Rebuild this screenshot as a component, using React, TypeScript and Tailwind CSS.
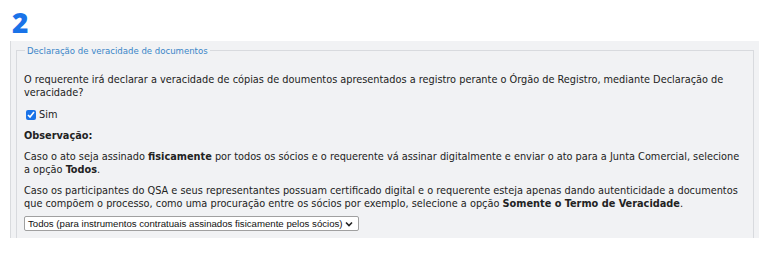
import React from "react";

export default function App() {
  const font = { fontFamily: '"DejaVu Sans Condensed", "DejaVu Sans", sans-serif' };
  return (
    <div className="w-[768px] h-[266px] bg-white relative overflow-hidden">
      <div className="h-[41px] pl-[12px] pt-[7px]">
        <span className="text-[28px] leading-[30px] font-black text-[#1a73e8]" style={{ fontFamily: '"Open Sans", sans-serif' }}>2</span>
      </div>
      <div className="ml-[10px] w-[749px] h-[197px] bg-[#f1f2f4] border-l border-[#d9dbde] pl-[5px] pr-[5px] pt-[3px]">
        <fieldset className="border border-[#d8dade] border-b-0 h-[194px] px-[7px] pt-0 text-[10.85px] leading-[13px] text-[#222]" style={font}>
          <legend className="text-[#3a86c8] text-[9.5px] px-[2px] ml-[1px]" style={font}>Declaração de veracidade de documentos</legend>
          <p className="mt-[16px]">O requerente irá declarar a veracidade de cópias de doumentos apresentados a registro perante o Órgão de Registro, mediante Declaração de veracidade?</p>
          <div className="flex items-center mt-[9px] ml-[2px] h-[13px]">
            <input type="checkbox" defaultChecked className="w-[10px] h-[10px] m-0 mr-[3px] accent-[#1a73e8]" />
            <span>Sim</span>
          </div>
          <p className="mt-[8px] font-bold">Observação:</p>
          <p className="mt-[8px]">Caso o ato seja assinado <b>fisicamente</b> por todos os sócios e o requerente vá assinar digitalmente e enviar o ato para a Junta Comercial, selecione a opção <b>Todos</b>.</p>
          <p className="mt-[8px]">Caso os participantes do QSA e seus representantes possuam certificado digital e o requerente esteja apenas dando autenticidade a documentos que compõem o processo, como uma procuração entre os sócios por exemplo, selecione a opção <b>Somente o Termo de Veracidade</b>.</p>
          <div className="mt-[6px] w-[335px] h-[15px] bg-white border border-[#a0a0a0] rounded-[2px] flex items-center justify-between pl-[3px] pr-[5px] text-[9.65px] whitespace-nowrap text-[#111]" style={{ fontFamily: '"Liberation Sans", Arial, sans-serif' }}>
            <span>Todos (para instrumentos contratuais assinados fisicamente pelos sócios)</span>
            <svg width="8" height="6" viewBox="0 0 8 6"><path d="M1 1.5 L4 4.5 L7 1.5" fill="none" stroke="#222" strokeWidth="1.6" /></svg>
          </div>
        </fieldset>
      </div>
    </div>
  );
}
